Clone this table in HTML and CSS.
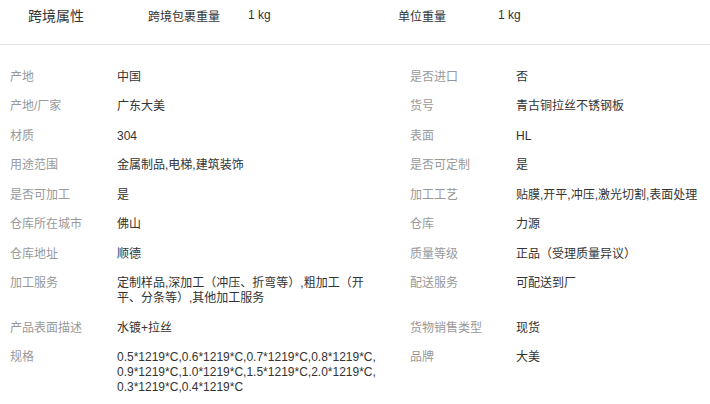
FILE: index.html
```html
<!DOCTYPE html>
<html lang="zh-CN">
<head>
<meta charset="utf-8">
<title>商品属性</title>
<link rel="stylesheet" href="styles.css">
</head>
<body>
<div class="page">
  <div class="cross">
    <div class="cross-title">跨境属性</div>
    <div class="cross-label">跨境包裹重量</div>
    <div class="cross-value">1 kg</div>
    <div class="cross-label">单位重量</div>
    <div class="cross-value">1 kg</div>
  </div>
  <div class="attrs">
    <div class="attr"><span class="attr-label">产地</span><span class="attr-value">中国</span></div>
    <div class="attr attr-right"><span class="attr-label">是否进口</span><span class="attr-value">否</span></div>
    <div class="attr"><span class="attr-label">产地/厂家</span><span class="attr-value">广东大美</span></div>
    <div class="attr attr-right"><span class="attr-label">货号</span><span class="attr-value">青古铜拉丝不锈钢板</span></div>
    <div class="attr"><span class="attr-label">材质</span><span class="attr-value">304</span></div>
    <div class="attr attr-right"><span class="attr-label">表面</span><span class="attr-value">HL</span></div>
    <div class="attr"><span class="attr-label">用途范围</span><span class="attr-value">金属制品,电梯,建筑装饰</span></div>
    <div class="attr attr-right"><span class="attr-label">是否可定制</span><span class="attr-value">是</span></div>
    <div class="attr"><span class="attr-label">是否可加工</span><span class="attr-value">是</span></div>
    <div class="attr attr-right"><span class="attr-label">加工工艺</span><span class="attr-value">贴膜,开平,冲压,激光切割,表面处理</span></div>
    <div class="attr"><span class="attr-label">仓库所在城市</span><span class="attr-value">佛山</span></div>
    <div class="attr attr-right"><span class="attr-label">仓库</span><span class="attr-value">力源</span></div>
    <div class="attr"><span class="attr-label">仓库地址</span><span class="attr-value">顺德</span></div>
    <div class="attr attr-right"><span class="attr-label">质量等级</span><span class="attr-value">正品（受理质量异议）</span></div>
    <div class="attr"><span class="attr-label">加工服务</span><span class="attr-value">定制样品,深加工（冲压、折弯等）,粗加工（开平、分条等）,其他加工服务</span></div>
    <div class="attr attr-right"><span class="attr-label">配送服务</span><span class="attr-value">可配送到厂</span></div>
    <div class="attr"><span class="attr-label">产品表面描述</span><span class="attr-value">水镀+拉丝</span></div>
    <div class="attr attr-right"><span class="attr-label">货物销售类型</span><span class="attr-value">现货</span></div>
    <div class="attr"><span class="attr-label">规格</span><span class="attr-value">0.5*1219*C,<wbr>0.6*1219*C,<wbr>0.7*1219*C,<wbr>0.8*1219*C,<wbr>0.9*1219*C,<wbr>1.0*1219*C,<wbr>1.5*1219*C,<wbr>2.0*1219*C,<wbr>0.3*1219*C,<wbr>0.4*1219*C</span></div>
    <div class="attr attr-right"><span class="attr-label">品牌</span><span class="attr-value">大美</span></div>
  </div>
</div>
</body>
</html>
```

FILE: styles.css
```css
html, body {
  margin: 0;
  padding: 0;
  background: #fff;
}

body {
  font-family: "Liberation Sans", Arial, "Noto Sans CJK SC", sans-serif;
  font-size: 12px;
  color: #333;
  overflow: hidden;
}

.page {
  width: 710px;
}

.cross {
  display: flex;
  align-items: center;
  height: 30px;
  padding: 0 0 14px 28px;
  border-bottom: 1px solid #e5e5e5;
}

.cross-title {
  width: 120px;
  font-size: 14px;
  color: #333;
}

.cross-label {
  width: 100px;
  color: #333;
}

.cross-value {
  width: 150px;
  color: #333;
}

.attrs {
  display: grid;
  grid-template-columns: 400px 310px;
  padding-top: 17px;
}

.attr {
  display: flex;
  align-items: flex-start;
  min-width: 0;
  padding: 7.5px 0 7px;
  line-height: 15px;
}

.attr-label {
  flex: 0 0 auto;
  box-sizing: border-box;
  width: 117px;
  padding-left: 10px;
  color: #999;
}

.attr-right .attr-label {
  width: 116px;
}

.attr-value {
  width: 262px;
  color: #333;
}

.attr-right .attr-value {
  width: auto;
  flex: 1 1 auto;
  min-width: 0;
}
```
